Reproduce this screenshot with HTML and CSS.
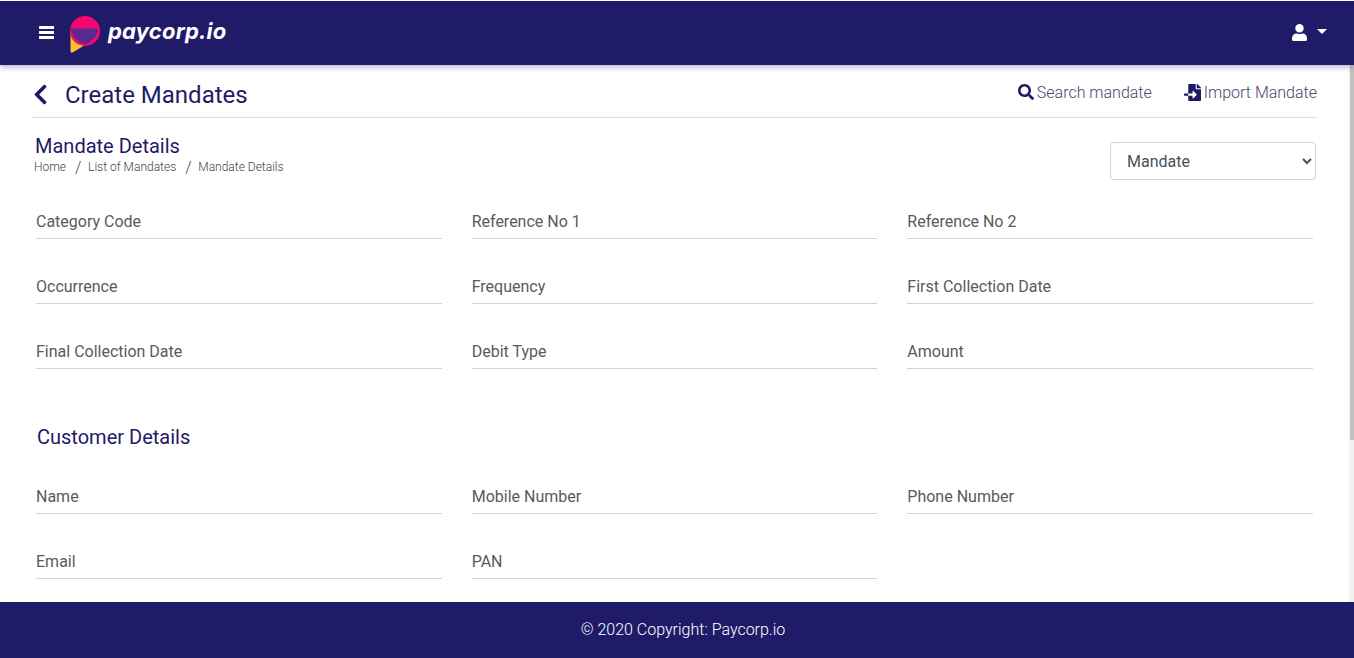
FILE: index.html
```html
<!DOCTYPE html>
<html lang="en">
<head>
<meta charset="utf-8">
<title>Create Mandates</title>
<link rel="stylesheet" href="styles.css">
</head>
<body>
<header class="navbar">
  <div class="nav-left">
    <svg class="burger" viewBox="0 0 15 13" width="15" height="13"><path d="M0.5 0h14a.5.5 0 0 1 .5.5v2a.5.5 0 0 1-.5.5H.5a.5.5 0 0 1-.5-.5V.5A.5.5 0 0 1 .5 0zM.5 5h14a.5.5 0 0 1 .5.5v2a.5.5 0 0 1-.5.5H.5a.5.5 0 0 1-.5-.5v-2A.5.5 0 0 1 .5 5zM.5 10h14a.5.5 0 0 1 .5.5v2a.5.5 0 0 1-.5.5H.5a.5.5 0 0 1-.5-.5v-2a.5.5 0 0 1 .5-.5z" fill="#fff"/></svg>
    <svg class="logo-mark" viewBox="0 0 32 38" width="32" height="38">
      <path d="M1.500 17 L1.500 35 Q1.700 37.500 4 36.200 L16 29 Z" fill="#fdc030"/>
      <circle cx="16" cy="15" r="15" fill="#f5086e"/>
      <path d="M1.300 12.500 H27 Q29.500 12.500 29 15 Q27 24 16 28.500 Q4 25 1.300 12.500 Z" fill="#5a2a8f"/>
    </svg>
    <span class="logo-text">paycorp.io</span>
  </div>
  <div class="nav-user">
    <svg viewBox="0 0 448 512" width="15" height="17"><path fill="#fff" d="M224 256c70.700 0 128-57.300 128-128S294.700 0 224 0 96 57.300 96 128s57.300 128 128 128zm89.600 32h-16.700c-22.200 10.200-46.900 16-72.900 16s-50.600-5.800-72.900-16h-16.700C60.200 288 0 348.200 0 422.400V464c0 26.500 21.500 48 48 48h352c26.500 0 48-21.500 48-48v-41.600c0-74.200-60.200-134.400-134.400-134.400z"/></svg>
    <span class="caret"></span>
  </div>
</header>

<main class="content">
  <div class="page-head">
    <div class="page-title">
      <svg viewBox="0 0 320 512" width="15" height="23"><path fill="#1f1a66" d="M34.500 239L228.900 44.700c9.400-9.400 24.600-9.400 33.900 0l22.700 22.700c9.400 9.400 9.400 24.500 0 33.900L131.500 256l154 154.800c9.300 9.400 9.300 24.500 0 33.900l-22.700 22.700c-9.400 9.400-24.600 9.400-33.900 0L34.500 273c-9.400-9.400-9.400-24.600 0-34z"/></svg>
      <h1>Create Mandates</h1>
    </div>
    <div class="page-actions">
      <a class="action">
        <svg viewBox="0 0 512 512" width="16" height="16"><path fill="#1f1a66" d="M505 442.700L405.300 343c-4.500-4.500-10.600-7-17-7H372c27.600-35.300 44-79.700 44-128C416 93.100 322.900 0 208 0S0 93.100 0 208s93.100 208 208 208c48.300 0 92.700-16.400 128-44v16.300c0 6.400 2.500 12.500 7 17l99.700 99.700c9.400 9.400 24.600 9.400 33.900 0l28.300-28.300c9.400-9.400 9.400-24.600.1-34zM208 336c-70.700 0-128-57.200-128-128 0-70.700 57.200-128 128-128 70.700 0 128 57.200 128 128 0 70.700-57.200 128-128 128z"/></svg>
        Search mandate
      </a>
      <a class="action">
        <svg viewBox="0 0 512 512" width="17" height="17"><path fill="#1f1a66" d="M16 288c-8.800 0-16 7.200-16 16v32c0 8.800 7.200 16 16 16h112v-64zm489-183L407.100 7c-4.500-4.500-10.600-7-17-7H384v128h128v-6.100c0-6.300-2.500-12.400-7-16.900zm-153 31V0H152c-13.300 0-24 10.700-24 24v264h128v-65.200c0-14.300 17.300-21.400 27.400-11.300L379 308c6.600 6.700 6.600 17.400 0 24l-95.700 96.400c-10.100 10.100-27.400 3-27.400-11.300V352H128v136c0 13.300 10.700 24 24 24h336c13.300 0 24-10.700 24-24V160H376c-13.200 0-24-10.800-24-24z"/></svg>
        Import Mandate
      </a>
    </div>
  </div>

  <div class="section-head">
    <div>
      <h2 class="section-title">Mandate Details</h2>
      <nav class="crumbs"><span>Home</span><i>/</i><span>List of Mandates</span><i>/</i><span>Mandate Details</span></nav>
    </div>
    <select class="type-select"><option>Mandate</option></select>
  </div>

  <div class="field-grid">
    <div class="field">Category Code</div>
    <div class="field">Reference No 1</div>
    <div class="field">Reference No 2</div>
    <div class="field">Occurrence</div>
    <div class="field">Frequency</div>
    <div class="field">First Collection Date</div>
    <div class="field">Final Collection Date</div>
    <div class="field">Debit Type</div>
    <div class="field">Amount</div>
  </div>

  <h2 class="customer-title">Customer Details</h2>

  <div class="field-grid">
    <div class="field">Name</div>
    <div class="field">Mobile Number</div>
    <div class="field">Phone Number</div>
    <div class="field">Email</div>
    <div class="field">PAN</div>
  </div>

  <div class="scrollbar"><div class="scrollbar-thumb"></div></div>
</main>

<footer class="footer">© 2020 Copyright: Paycorp.io</footer>
</body>
</html>
```
FILE: styles.css
```css
* { box-sizing: border-box; }
html, body { height: 100%; }
body {
  margin: 0;
  display: flex;
  flex-direction: column;
  overflow: hidden;
  background: #fff;
  font-family: Roboto, "Liberation Sans", sans-serif;
  color: #555;
  border-top: 1px solid #fff;
}
.navbar {
  flex: none;
  height: 64px;
  background: #201b69;
  display: flex;
  align-items: center;
  justify-content: space-between;
  padding: 0 27px 2px 39px;
  box-shadow: 0 2px 6px rgba(31, 26, 102, .35);
  position: relative;
  z-index: 2;
}
.nav-left { display: flex; align-items: center; }
.burger { margin-right: 15px; }
.logo-mark { margin-right: 7px; margin-top: 6px; }
.logo-text {
  font-family: Inter, "Open Sans", sans-serif;
  font-style: italic;
  font-weight: 700;
  font-size: 22px;
  letter-spacing: .2px;
  color: #fff;
  margin-top: -2px;
}
.nav-user { display: flex; align-items: center; gap: 10px; }
.caret {
  width: 0;
  height: 0;
  border: 5px solid transparent;
  border-top-color: #fff;
  border-bottom-width: 0;
  margin-top: -2px;
}
.content {
  flex: 1;
  min-height: 0;
  overflow: hidden;
  position: relative;
  padding: 0 37px 0 32px;
}
.scrollbar {
  position: absolute;
  top: 0;
  right: 0;
  bottom: 0;
  width: 5px;
  background: #f1f1f1;
}
.scrollbar-thumb {
  width: 4px;
  height: 375px;
  margin-left: 1px;
  background: #c1c1c1;
}
.page-head {
  height: 53px;
  display: flex;
  align-items: center;
  justify-content: space-between;
  padding-top: 7px;
  border-bottom: 1px solid #dedede;
}
.page-title { display: flex; align-items: center; gap: 17px; }
.page-title svg { margin-left: 1px; }
.page-title h1 {
  margin: 0;
  font-size: 24px;
  font-weight: 400;
  color: #1f1a66;
}
.page-actions { display: flex; gap: 32px; margin-top: -5px; }
.action {
  display: flex;
  align-items: center;
  gap: 3px;
  font-size: 16px;
  font-weight: 300;
  color: #48466b;
}
.section-head {
  display: flex;
  justify-content: space-between;
  align-items: flex-start;
  padding: 16px 1px 0 3px;
  height: 82px;
}
.section-title {
  margin: 0;
  font-size: 20px;
  font-weight: 400;
  line-height: 24px;
  color: #1f1a66;
}
.crumbs {
  display: flex;
  font-size: 12px;
  font-weight: 300;
  line-height: 14px;
  color: #444;
  margin-left: -1px;
  margin-top: 2px;
}
.crumbs i { font-style: normal; font-size: 16px; margin: 1px 8px 0 9px; width: 5px; }
.type-select {
  width: 206px;
  height: 38px;
  margin-top: 8px;
  padding: 0 12px;
  border: 1px solid #ced4da;
  border-radius: 4px;
  background: #fff;
  font-family: inherit;
  font-size: 16px;
  color: #495057;
}
.field-grid {
  display: grid;
  grid-template-columns: repeat(3, 1fr);
  column-gap: 30px;
  row-gap: 26px;
  padding: 0 4px;
}
.field {
  height: 39px;
  padding-top: 12px;
  font-size: 16px;
  line-height: 19px;
  color: #5a5a5a;
  border-bottom: 1px solid #ced4da;
}
.customer-title {
  margin: 52px 0 0 5px;
  height: 54px;
  font-size: 20px;
  font-weight: 400;
  line-height: 32px;
  color: #1f1a66;
}
.footer {
  flex: none;
  height: 56px;
  display: flex;
  align-items: center;
  justify-content: center;
  background: #201b69;
  color: #fff;
  font-size: 16px;
  font-weight: 300;
  padding: 0 0 2px 12px;
}
```
